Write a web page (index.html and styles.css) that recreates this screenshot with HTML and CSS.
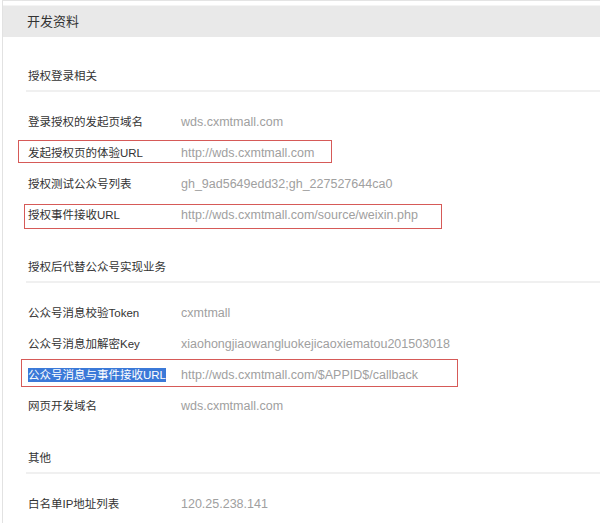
FILE: index.html
```html
<!DOCTYPE html>
<html lang="zh-CN">
<head>
<meta charset="utf-8">
<title>开发资料</title>
<link rel="stylesheet" href="styles.css">
</head>
<body>
<div class="page">
  <div class="header">开发资料</div>
  <div class="content">
    <div class="section">
      <div class="section-title">授权登录相关</div>
      <div class="rows">
        <div class="row"><span class="label">登录授权的发起页域名</span><span class="value">wds.cxmtmall.com</span></div>
        <div class="row"><span class="label">发起授权页的体验URL</span><span class="value">http://wds.cxmtmall.com</span></div>
        <div class="row"><span class="label">授权测试公众号列表</span><span class="value">gh_9ad5649edd32;gh_227527644ca0</span></div>
        <div class="row"><span class="label">授权事件接收URL</span><span class="value">http://wds.cxmtmall.com/source/weixin.php</span></div>
      </div>
    </div>
    <div class="section">
      <div class="section-title">授权后代替公众号实现业务</div>
      <div class="rows">
        <div class="row"><span class="label">公众号消息校验Token</span><span class="value">cxmtmall</span></div>
        <div class="row"><span class="label">公众号消息加解密Key</span><span class="value">xiaohongjiaowangluokejicaoxiematou201503018</span></div>
        <div class="row"><span class="label"><span class="selected">公众号消息与事件接收URL</span></span><span class="value">http://wds.cxmtmall.com/$APPID$/callback</span></div>
        <div class="row"><span class="label">网页开发域名</span><span class="value">wds.cxmtmall.com</span></div>
      </div>
    </div>
    <div class="section">
      <div class="section-title">其他</div>
      <div class="rows">
        <div class="row"><span class="label">白名单IP地址列表</span><span class="value">120.25.238.141</span></div>
      </div>
    </div>
  </div>
  <div class="mark mark-1"></div>
  <div class="mark mark-2"></div>
  <div class="mark mark-3"></div>
</div>
</body>
</html>
```

FILE: styles.css
```css
html, body {
  margin: 0;
  padding: 0;
  background: #ffffff;
}
body {
  font-family: "Liberation Sans", "Noto Sans CJK SC", sans-serif;
  font-size: 12px;
  color: #333333;
}
.page {
  position: relative;
  width: 600px;
  height: 523px;
  overflow: hidden;
  box-sizing: border-box;
  border-top: 1px solid #e4e4e4;
  border-left: 1px solid #e2e2e2;
  margin-left: 2px;
}
.header {
  margin-top: 4px;
  height: 31px;
  line-height: 31px;
  background: #e9e9e9;
  border-top: 1px solid #f4f4f4;
  padding-left: 24px;
  font-size: 13px;
  color: #333333;
}
.content {
  padding-top: 25px;
  padding-left: 23px;
}
.section + .section {
  margin-top: 23px;
}
.section-title {
  height: 28px;
  line-height: 29px;
  padding-left: 2px;
  border-bottom: 2px solid #f0f0f0;
  color: #333333;
  font-size: 11.5px;
}
.rows {
  padding-top: 14px;
  padding-left: 2px;
}
.row {
  display: grid;
  grid-template-columns: 153px 1fr;
  align-items: center;
  height: 31px;
  line-height: 32px;
  white-space: nowrap;
}
.label {
  color: #333333;
  font-size: 11.5px;
}
.value {
  color: #a0a0a0;
  font-size: 12.5px;
}
.selected {
  background: #3b79d8;
  color: #ffffff;
  padding: 1px 0;
}
.mark {
  position: absolute;
  border: 1px solid #d65a58;
  box-sizing: border-box;
}
.mark-1 {
  left: 15px;
  top: 139px;
  width: 314px;
  height: 23px;
}
.mark-2 {
  left: 21px;
  top: 203px;
  width: 418px;
  height: 25px;
}
.mark-3 {
  left: 18px;
  top: 358px;
  width: 437px;
  height: 28px;
}
```
